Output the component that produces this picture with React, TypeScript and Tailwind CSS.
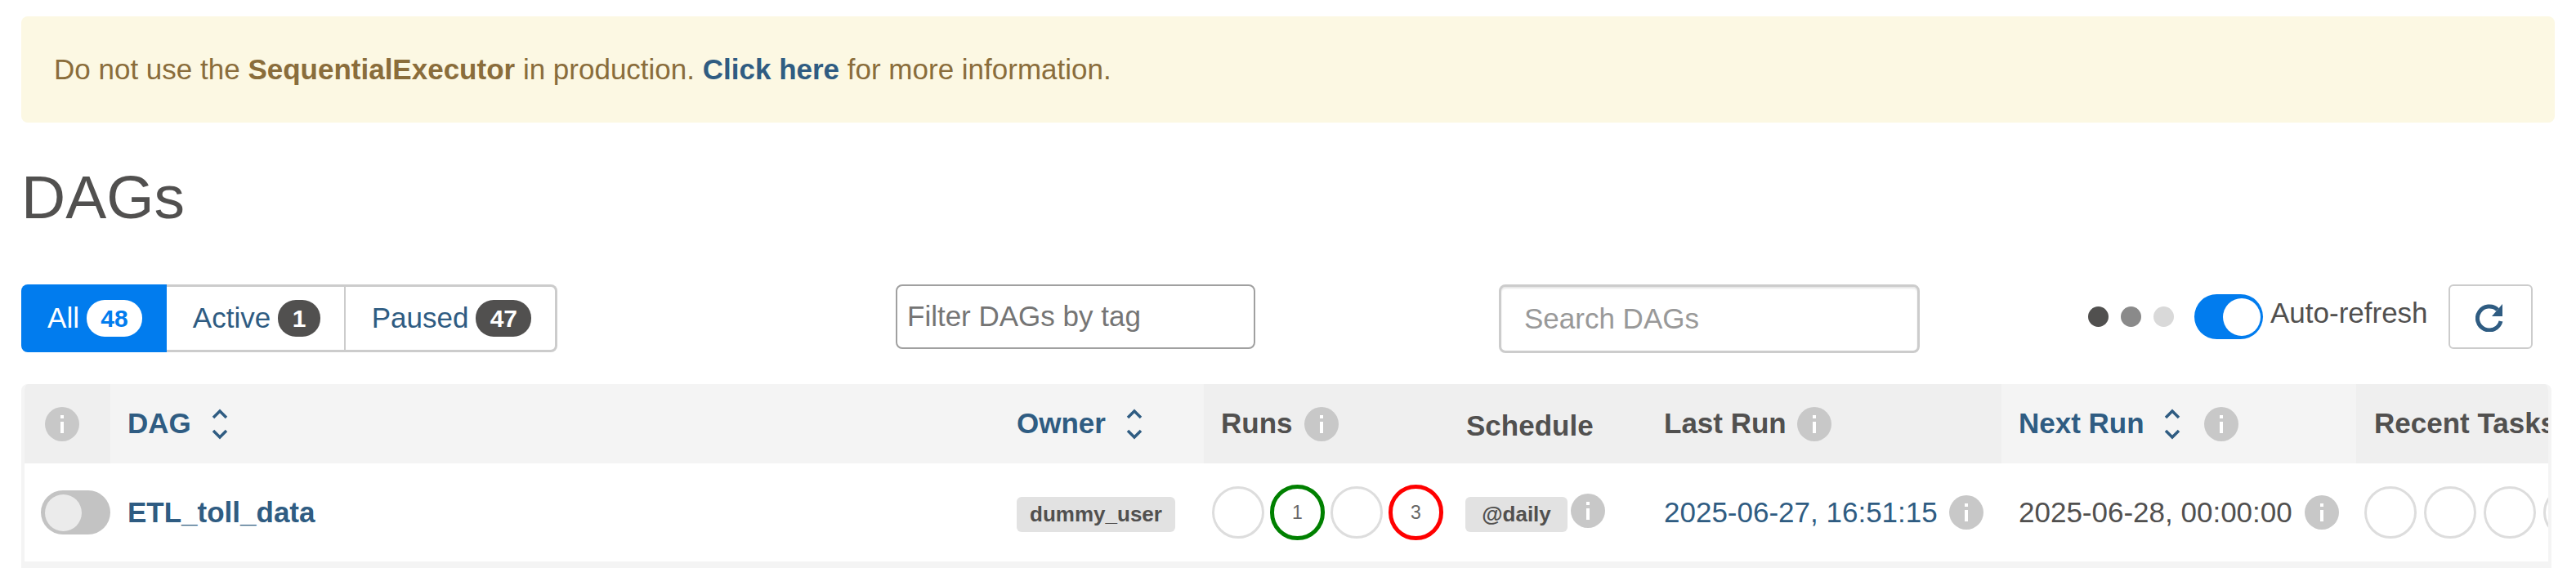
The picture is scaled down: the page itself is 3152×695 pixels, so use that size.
const Info = ({ className = "" }: { className?: string }) => (
  <svg viewBox="0 0 42 42" className={`w-[42px] h-[42px] shrink-0 ${className}`}>
    <circle cx="21" cy="21" r="21" fill="#c8c8c8" />
    <rect x="19" y="10" width="4" height="4" fill="#fff" />
    <rect x="19" y="18" width="4" height="14" fill="#fff" />
  </svg>
);

const Sort = ({ className = "" }: { className?: string }) => (
  <svg viewBox="0 0 20 38" className={`w-[20px] h-[38px] shrink-0 ${className}`} fill="none" stroke="#2f5c82" strokeWidth="3.5">
    <path d="M2 11 L10 3 L18 11" />
    <path d="M2 27 L10 35 L18 27" />
  </svg>
);

const Circle = ({ n, c }: { n?: string; c?: "g" | "r" }) => {
  if (c) {
    return (
      <div
        className={`w-[67px] h-[68px] shrink-0 rounded-full border-[5px] flex items-center justify-center text-[23px] leading-none text-[#666666] ${c === "g" ? "border-[#008000]" : "border-[#ff0000]"}`}
      >
        {n}
      </div>
    );
  }
  return <div className="w-[64px] h-[64px] shrink-0 rounded-full border-[3px] border-[#dddddd] bg-white" />;
};

const Tag = ({ children, className = "" }: { children: string; className?: string }) => (
  <span className={`h-[43px] rounded-[6px] bg-[#e2e2e2] flex items-center justify-center text-[26px] font-bold text-[#51504f] ${className}`}>
    {children}
  </span>
);

export default function App() {
  return (
    <div className="w-[3152px] h-[695px] overflow-hidden bg-white text-[35px] text-[#51504f] font-['Liberation_Sans',Arial,sans-serif]">
      <div className="pt-[20px] pl-[26px]">
        <div className="w-[3100px] h-[130px] rounded-[8px] bg-[#fcf8e3] text-[#8a6d3b] pl-[40px] flex items-center">
          <span>
            Do not use the <b>SequentialExecutor</b> in production.{" "}
            <b className="text-[#2f5c82]">Click here</b> for more information.
          </span>
        </div>

        <h1 className="text-[75px] leading-none mt-[54px] font-normal h-[144px]">DAGs</h1>

        <div className="flex items-start h-[122px]">
          <div className="flex h-[83px] w-[656px]">
            <div className="w-[178px] bg-[#017cee] rounded-l-[8px] text-white flex items-center justify-center gap-[9px] pl-[2px]">
              All
              <span className="w-[68px] h-[45px] rounded-[22px] bg-white text-[#017cee] font-bold text-[30px] flex items-center justify-center">48</span>
            </div>
            <div className="w-[219px] border-y-[3px] border-r-[2px] border-[#cccccc] text-[#2f5c82] flex items-center justify-center gap-[9px] pl-[3px]">
              Active
              <span className="w-[52px] h-[45px] rounded-[22px] bg-[#51504f] text-white font-bold text-[30px] flex items-center justify-center">1</span>
            </div>
            <div className="flex-1 border-y-[3px] border-r-[3px] border-[#cccccc] rounded-r-[8px] text-[#2f5c82] flex items-center justify-center gap-[9px] pl-[3px]">
              Paused
              <span className="w-[68px] h-[45px] rounded-[22px] bg-[#51504f] text-white font-bold text-[30px] flex items-center justify-center">47</span>
            </div>
          </div>

          <div className="ml-[414px] w-[440px] h-[79px] rounded-[8px] border-[2px] border-[#a0a0a0] flex items-center pl-[12px] text-[#757575]">
            Filter DAGs by tag
          </div>

          <div className="ml-[298px] w-[515px] h-[84px] rounded-[8px] border-[3px] border-[#cccccc] shadow-[inset_0_2px_2px_rgba(0,0,0,0.1)] flex items-center pl-[28px] text-[#999999]">
            Search DAGs
          </div>

          <div className="ml-[206px] mt-[12px] flex items-center h-[55px]">
            <span className="w-[25px] h-[25px] rounded-full bg-[#51504f]" />
            <span className="ml-[15px] w-[25px] h-[25px] rounded-full bg-[#8a8a8a]" />
            <span className="ml-[15px] w-[25px] h-[25px] rounded-full bg-[#d9d9d9]" />
            <span className="ml-[25px] w-[84px] h-[55px] rounded-full bg-[#017cee] flex items-center justify-end pr-[3px]">
              <span className="w-[46px] h-[46px] rounded-full bg-white" />
            </span>
            <span className="ml-[9px] -mt-[8px]">Auto-refresh</span>
          </div>

          <div className="ml-[25px] w-[103px] h-[79px] rounded-[6px] border-[2px] border-[#cccccc] flex items-center justify-center">
            <svg viewBox="0 0 36 36" className="w-[36px] h-[36px]" fill="none">
              <path d="M31 23 A14.5 14.5 0 1 1 27 9" stroke="#2f5c82" strokeWidth="5" />
              <path d="M33 2 L33 17 L20 17 Z" fill="#2f5c82" />
            </svg>
          </div>
        </div>

        <div className="w-[3096px] h-[225px] overflow-hidden rounded-t-[8px] border-x-[4px] border-[#f4f4f4]">
          <div className="flex h-[97px] -mx-[4px] font-bold">
            <div className="w-[109px] bg-[#efefef] flex items-center pl-[29px]">
              <Info />
            </div>
            <div className="w-[1338px] bg-[#f4f4f4] flex items-center pl-[21px] text-[#2f5c82]">
              <span className="w-[1088px] flex items-center gap-[25px]">DAG<Sort /></span>
              <span className="flex items-center gap-[25px]">Owner<Sort /></span>
            </div>
            <div className="w-[976px] bg-[#efefef] flex items-center pl-[21px]">
              <span className="w-[300px] flex items-center gap-[14px]">Runs<Info /></span>
              <span className="w-[242px] pt-[6px]">Schedule</span>
              <span className="flex items-center gap-[13px]">Last Run<Info /></span>
            </div>
            <div className="w-[434px] bg-[#f4f4f4] flex items-center pl-[21px] text-[#2f5c82]">
              Next Run
              <Sort className="ml-[24px]" />
              <Info className="ml-[29px]" />
            </div>
            <div className="w-[239px] bg-[#efefef] flex items-center pl-[22px] whitespace-nowrap overflow-hidden">Recent Tasks</div>
          </div>

          <div className="flex h-[120px] -mx-[4px] items-center">
            <div className="w-[109px] pl-[24px] flex items-center">
              <span className="w-[85px] h-[54px] rounded-full bg-[#c3c3c3] flex items-center pl-[5px]">
                <span className="w-[45px] h-[45px] rounded-full bg-[#ebebeb]" />
              </span>
            </div>
            <div className="w-[1338px] flex items-center pl-[21px]">
              <span className="w-[1088px] font-bold text-[#2f5c82]">ETL_toll_data</span>
              <Tag className="w-[194px] mt-[4px]">dummy_user</Tag>
            </div>
            <div className="w-[976px] flex items-center pl-[10px]">
              <div className="w-[310px] flex items-center gap-[7px]">
                <Circle />
                <Circle n="1" c="g" />
                <Circle />
                <Circle n="3" c="r" />
              </div>
              <div className="w-[243px] flex items-center gap-[4px]">
                <Tag className="w-[125px] mt-[4px]">@daily</Tag>
                <Info className="-mt-[4px]" />
              </div>
              <div className="flex items-center gap-[14px] text-[#2f5c82]">
                2025-06-27, 16:51:15
                <Info />
              </div>
            </div>
            <div className="w-[434px] flex items-center gap-[15px] pl-[21px] whitespace-nowrap">
              2025-06-28, 00:00:00
              <Info />
            </div>
            <div className="w-[239px] flex items-center gap-[9px] pl-[10px] overflow-hidden">
              <Circle />
              <Circle />
              <Circle />
              <Circle />
            </div>
          </div>
          <div className="h-[8px] -mx-[4px] bg-[#f4f4f4]" />
        </div>
      </div>
    </div>
  );
}
